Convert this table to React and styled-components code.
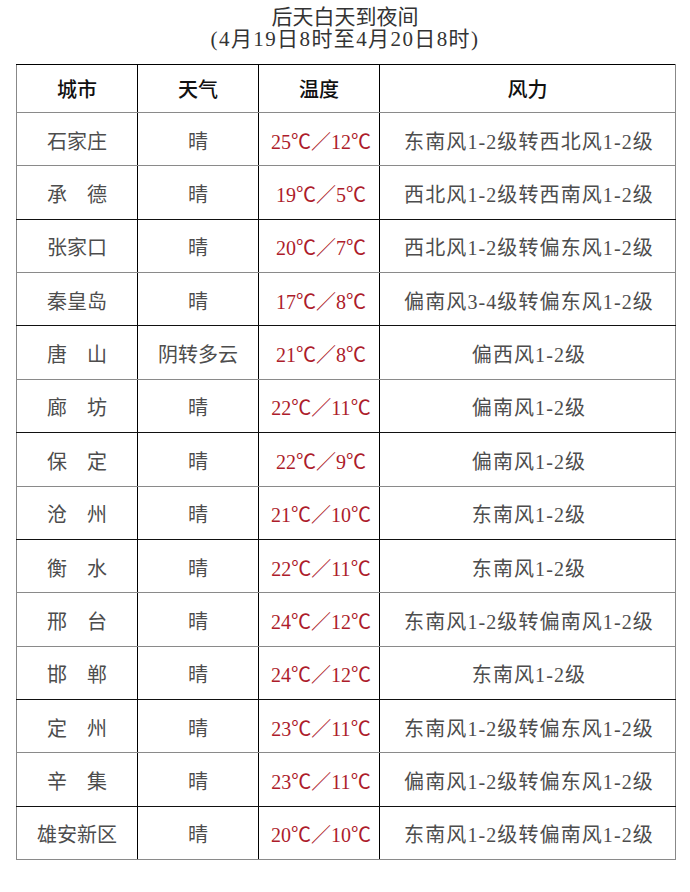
import React from 'react';
import styled, { createGlobalStyle } from 'styled-components';

const GlobalStyle = createGlobalStyle`
  html, body {
    margin: 0;
    padding: 0;
    background: #fff;
  }
  body {
    font-family: "Liberation Serif", "Noto Sans CJK SC", serif;
  }
`;

const Page = styled.div`
  width: 690px;
  height: 892px;
  background: #fff;
  padding-top: 6px;
  box-sizing: border-box;
`;

const Title = styled.h1`
  margin: 0;
  font-size: 21px;
  line-height: 22px;
  font-weight: normal;
  color: #333;
  text-align: center;
`;

const Subtitle = styled.span`
  display: block;
  letter-spacing: 1.4px;
`;

const Table = styled.table`
  margin: 14px 0 0 16px;
  width: 660px;
  border-collapse: collapse;
  table-layout: fixed;
  border-top: 1px solid #000;
  border-left: 1px solid #888;
  border-right: 1px solid #888;
  font-size: 20px;
  color: #4d4d4d;

  col.narrow {
    width: 121px;
  }
`;

const HeadRow = styled.tr`
  height: 48px;
`;

const Row = styled.tr`
  height: 53.36px;

  td {
    border-bottom: 1px solid ${(p) => (p.$dark ? '#111' : '#8a8a8a')};
  }
`;

const HeadCell = styled.th`
  padding: 0;
  font-weight: 500;
  color: #111;
  text-align: center;
  border-bottom: 1px solid #8a8a8a;
  & + & {
    border-left: 1px solid #000;
  }
`;

const Cell = styled.td`
  padding: 2px 0 0;
  text-align: center;
  white-space: nowrap;
  & + & {
    border-left: 1px solid #000;
  }
`;

const Temp = styled(Cell)`
  padding-left: 4px;
  color: #ad1c2b;
`;

const Wind = styled(Cell)`
  padding-left: 3px;
  letter-spacing: 1.1px;
`;

const CityName = styled.span`
  display: inline-block;
  width: ${(p) => (p.$spread ? '3em' : 'auto')};
  text-align: ${(p) => (p.$spread ? 'justify' : 'center')};
  text-align-last: ${(p) => (p.$spread ? 'justify' : 'center')};
`;

const rows = [
  ['石家庄', '晴', 25, 12, '东南风1-2级转西北风1-2级'],
  ['承德', '晴', 19, 5, '西北风1-2级转西南风1-2级'],
  ['张家口', '晴', 20, 7, '西北风1-2级转偏东风1-2级'],
  ['秦皇岛', '晴', 17, 8, '偏南风3-4级转偏东风1-2级'],
  ['唐山', '阴转多云', 21, 8, '偏西风1-2级'],
  ['廊坊', '晴', 22, 11, '偏南风1-2级'],
  ['保定', '晴', 22, 9, '偏南风1-2级'],
  ['沧州', '晴', 21, 10, '东南风1-2级'],
  ['衡水', '晴', 22, 11, '东南风1-2级'],
  ['邢台', '晴', 24, 12, '东南风1-2级转偏南风1-2级'],
  ['邯郸', '晴', 24, 12, '东南风1-2级'],
  ['定州', '晴', 23, 11, '东南风1-2级转偏东风1-2级'],
  ['辛集', '晴', 23, 11, '偏南风1-2级转偏东风1-2级'],
  ['雄安新区', '晴', 20, 10, '东南风1-2级转偏南风1-2级'],
];

// rows whose bottom rule prints darker in the source sheet
const darkLines = [1, 3, 5, 7, 10, 12];

export default function App() {
  return (
    <Page>
      <GlobalStyle />
      <Title>
        后天白天到夜间
        <Subtitle>(4月19日8时至4月20日8时)</Subtitle>
      </Title>
      <Table>
        <colgroup>
          <col className="narrow" />
          <col className="narrow" />
          <col className="narrow" />
          <col />
        </colgroup>
        <thead>
          <HeadRow>
            <HeadCell>城市</HeadCell>
            <HeadCell>天气</HeadCell>
            <HeadCell>温度</HeadCell>
            <HeadCell>风力</HeadCell>
          </HeadRow>
        </thead>
        <tbody>
          {rows.map(([city, weather, hi, lo, wind], i) => (
            <Row key={city} $dark={darkLines.includes(i)}>
              <Cell>
                <CityName $spread={city.length === 2}>{city}</CityName>
              </Cell>
              <Cell>{weather}</Cell>
              <Temp>
                {hi}℃／{lo}℃
              </Temp>
              <Wind>{wind}</Wind>
            </Row>
          ))}
        </tbody>
      </Table>
    </Page>
  );
}
